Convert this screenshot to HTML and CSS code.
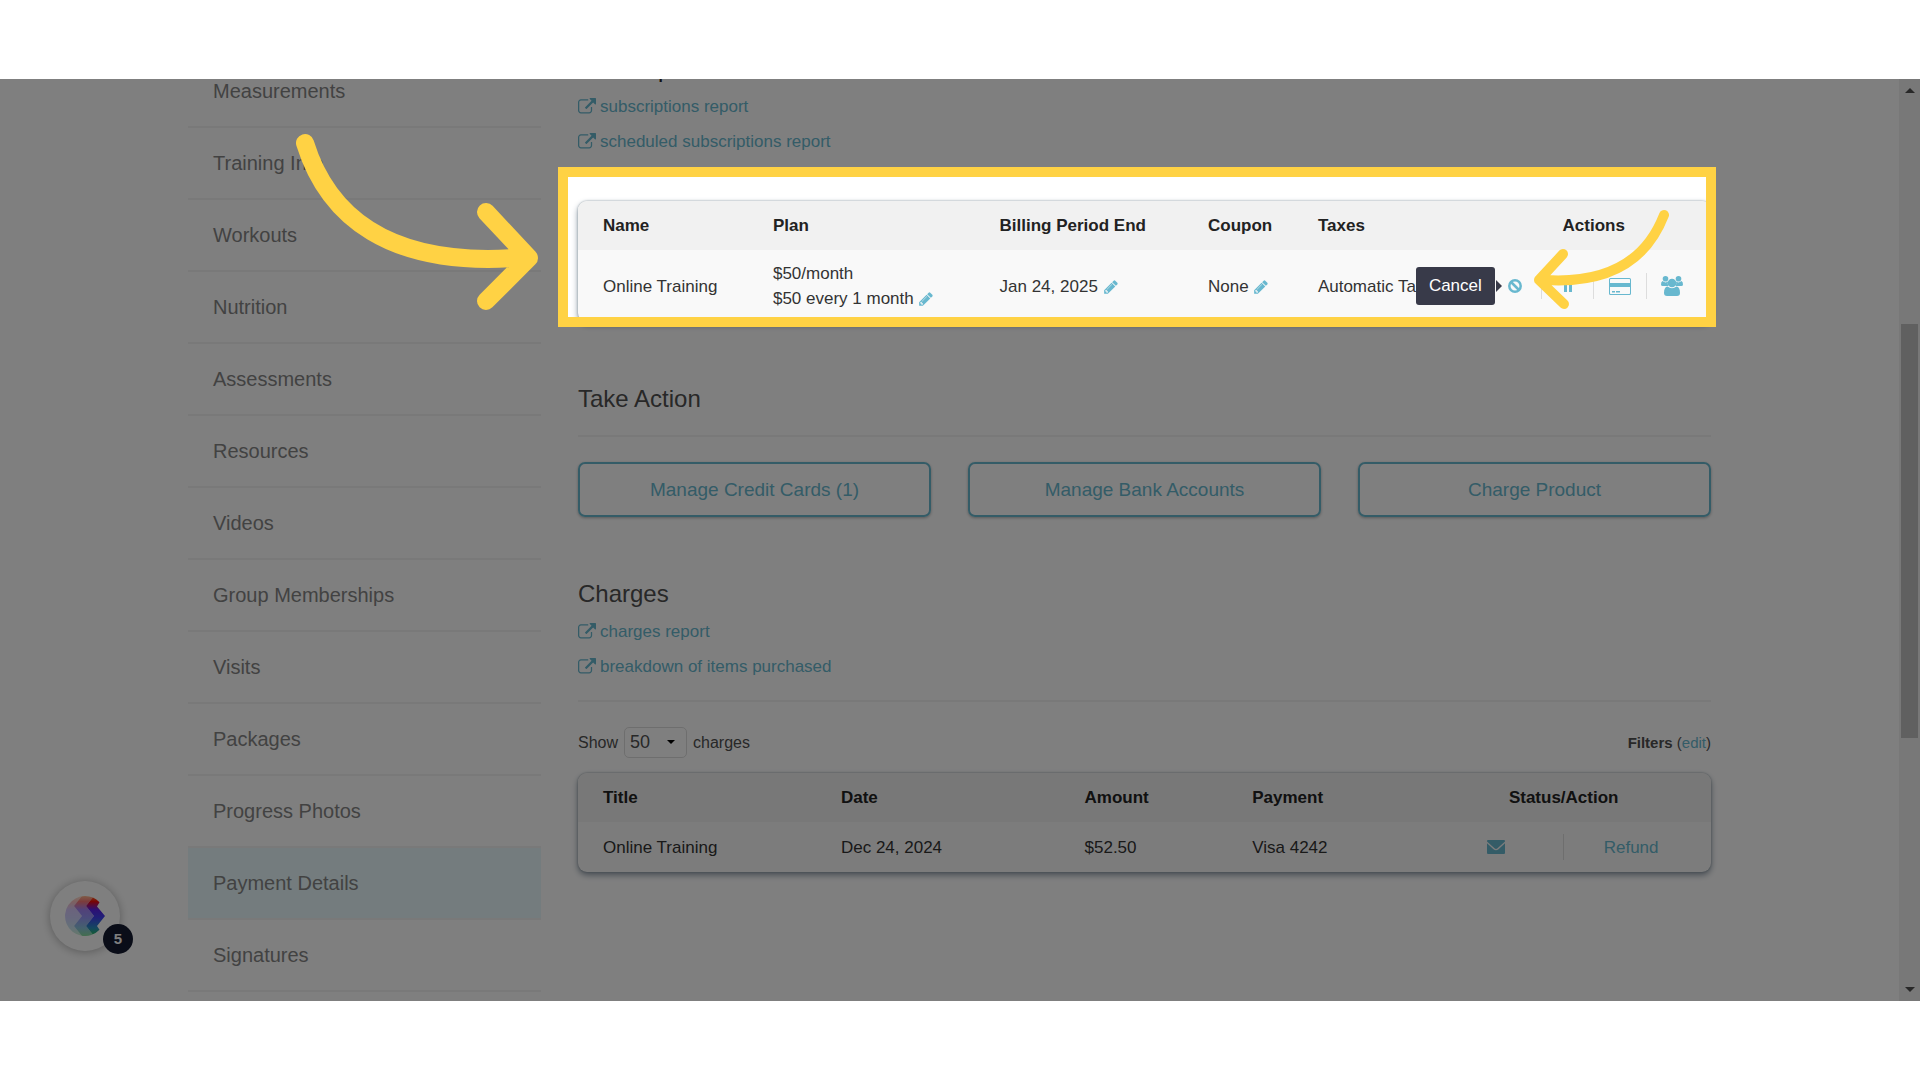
FILE: index.html
```html
<!DOCTYPE html>
<html lang="en">
<head>
<meta charset="utf-8">
<title>Payment Details</title>
<link rel="stylesheet" href="styles.css">
</head>
<body>
<svg class="sprite" aria-hidden="true">
  <symbol id="external" viewBox="0 0 1792 1792"><path d="M1408 928v320q0 119-84.5 203.5t-203.5 84.5h-832q-119 0-203.5-84.5t-84.5-203.5v-832q0-119 84.5-203.5t203.5-84.5h704q14 0 23 9t9 23v64q0 14-9 23t-23 9h-704q-66 0-113 47t-47 113v832q0 66 47 113t113 47h832q66 0 113-47t47-113v-320q0-14 9-23t23-9h64q14 0 23 9t9 23zm384-864v512q0 26-19 45t-45 19-45-19l-176-176-652 652q-10 10-23 10t-23-10l-114-114q-10-10-10-23t10-23l652-652-176-176q-19-19-19-45t19-45 45-19h512q26 0 45 19t19 45z"/></symbol>
  <symbol id="pencil" viewBox="0 0 1792 1792"><path d="M491 1536l91-91-235-235-91 91v107h128v128h107zm523-928q0-22-22-22-10 0-17 7l-542 542q-7 7-7 17 0 22 22 22 10 0 17-7l542-542q7-7 7-17zm-54-192l416 416-832 832h-416v-416zm683 96q0 53-37 90l-166 166-416-416 166-165q36-38 90-38 53 0 91 38l235 234q37 39 37 91z"/></symbol>
</svg>
<div class="screen">
  <div class="page">
    <nav class="sidebar">
      <a href="#">Measurements</a>
      <a href="#">Training Info</a>
      <a href="#">Workouts</a>
      <a href="#">Nutrition</a>
      <a href="#">Assessments</a>
      <a href="#">Resources</a>
      <a href="#">Videos</a>
      <a href="#">Group Memberships</a>
      <a href="#">Visits</a>
      <a href="#">Packages</a>
      <a href="#">Progress Photos</a>
      <a href="#" class="current">Payment Details</a>
      <a href="#">Signatures</a>
    </nav>
    <main class="content">
      <section>
        <h2 class="strong">Subscriptions</h2>
        <a class="report" href="#"><svg><use href="#external"/></svg>subscriptions report</a>
        <a class="report" href="#"><svg><use href="#external"/></svg>scheduled subscriptions report</a>
        <div class="spotlight">
          <table class="subscriptions">
            <colgroup><col class="s1"><col class="s2"><col class="s3"><col class="s4"><col class="s5"><col></colgroup>
            <thead><tr><th>Name</th><th>Plan</th><th>Billing Period End</th><th>Coupon</th><th>Taxes</th><th class="center">Actions</th></tr></thead>
            <tbody><tr>
              <td>Online Training</td>
              <td>$50/month<br>$50 every 1 month <button class="edit" aria-label="Edit plan"><svg><use href="#pencil"/></svg></button></td>
              <td>Jan 24, 2025 <button class="edit" aria-label="Edit period end"><svg><use href="#pencil"/></svg></button></td>
              <td>None <button class="edit" aria-label="Edit coupon"><svg><use href="#pencil"/></svg></button></td>
              <td>Automatic Tax</td>
              <td class="actions"><div class="split">
                <button aria-label="Cancel subscription"><svg class="ban" width="14" height="14" viewBox="0 0 14 14"><circle cx="7" cy="7" r="5.7"/><path d="M3 3l8 8"/></svg><span class="tip">Cancel</span></button>
                <button aria-label="Pause"><svg width="8" height="14" viewBox="0 0 8 14"><path d="M0 1h3v12H0zM5 1h3v12H5z"/></svg></button>
                <button aria-label="Credit card"><svg width="22" height="17" viewBox="0 0 22 17"><path fill-rule="evenodd" d="M1.500 0h19Q22 0 22 1.500v14q0 1.500-1.500 1.500h-19Q0 17 0 15.500v-14Q0 0 1.500 0zM1 1.500V5h20V1.500L20.500 1h-19zM1 9v6.500l.5.5h19l.5-.5V9zM3 13h3v1.500H3zM7 13h4v1.500H7z"/></svg></button>
                <button aria-label="Group"><svg width="22" height="20" viewBox="0 0 22 20"><circle cx="4.500" cy="2.800" r="2.800"/><circle cx="17.500" cy="2.800" r="2.800"/><path d="M1.500 5Q4.500 7.500 7 5.600 6.200 8 7.600 10H1.700Q0 10 0 8.500 0 5.500 1.500 5zM20.500 5Q17.500 7.500 15 5.600 15.800 8 14.400 10h5.900Q22 10 22 8.500 22 5.500 20.500 5z"/><circle cx="11" cy="7" r="4.300"/><path d="M6.500 10.500Q11 14 15.500 10.500 19 11 19 17q0 3-3 3H6q-3 0-3-3 0-6 3.500-6.500z"/></svg></button>
              </div></td>
            </tr></tbody>
          </table>
          <div class="frame"></div>
          <svg class="arrow arrow-big" viewBox="0 0 240 180"><path d="M10 10C32 81 92 137 232 124M191 79l43 46-43 43"/></svg>
          <svg class="arrow arrow-small" viewBox="0 0 140 110"><path d="M131 11C114 55 77 80 12 76M30 50L6 76l25 24"/></svg>
        </div>
      </section>

      <section class="take-action">
        <h2>Take Action</h2>
        <hr>
        <div class="buttons">
          <button>Manage Credit Cards (1)</button>
          <button>Manage Bank Accounts</button>
          <button>Charge Product</button>
        </div>
      </section>

      <section>
        <h2>Charges</h2>
        <a class="report" href="#"><svg><use href="#external"/></svg>charges report</a>
        <a class="report" href="#"><svg><use href="#external"/></svg>breakdown of items purchased</a>
        <hr>
        <div class="controls">
          <label for="count">Show</label>
          <span class="select"><select id="count"><option>50</option></select></span>
          <span>charges</span>
          <span class="filters"><b>Filters</b> (<a href="#">edit</a>)</span>
        </div>
        <table class="charges">
          <colgroup><col class="c1"><col class="c2"><col class="c3"><col class="c4"><col></colgroup>
          <thead><tr><th>Title</th><th>Date</th><th>Amount</th><th>Payment</th><th class="center">Status/Action</th></tr></thead>
          <tbody><tr>
            <td>Online Training</td><td>Dec 24, 2024</td><td>$52.50</td><td>Visa 4242</td>
            <td class="actions"><div class="split">
              <button aria-label="Email receipt"><svg width="18" height="14" viewBox="0 0 18 14"><path d="M1 0h16q1 0 1 1v.5L10.500 8.300q-1.500 1.200-3 0L0 1.500V1q0-1 1-1zM0 3.300l6.500 6q2.500 2 5 0l6.500-6V13q0 1-1 1H1q-1 0-1-1z"/></svg></button>
              <button>Refund</button>
            </div></td>
          </tr></tbody>
        </table>
      </section>
    </main>
  </div>

  <div class="scrollbar"><i class="up"></i><div class="track"><div class="thumb"></div></div><i class="down"></i></div>

  <button class="launcher" aria-label="Open checklist">
    <svg width="40" height="40" viewBox="0 0 40 40">
      <defs>
        <linearGradient id="hue" gradientUnits="userSpaceOnUse" x1="0" y1="0" x2="0" y2="40"><stop offset="0" stop-color="#ff7a30"/><stop offset=".14" stop-color="#f00a0a"/><stop offset=".34" stop-color="#5a20e8"/><stop offset=".54" stop-color="#4040f0"/><stop offset=".8" stop-color="#2a90c0"/><stop offset="1" stop-color="#28c050"/></linearGradient>
        <clipPath id="disc"><path d="M20 0a20 20 0 0 1 14.500 6.200L32 10.500 40 20l-8 10 2.500 3.800A20 20 0 1 1 20 0z"/></clipPath>
      </defs>
      <g clip-path="url(#disc)">
        <path fill="url(#hue)" opacity=".25" d="M0 0h17l-8 10 8 10-8 10 8 10H0z"/>
        <path fill="url(#hue)" opacity=".55" d="M17 0h12l-8 10 8 10-8 10 8 10H17l-8-10 8-10-8-10z"/>
        <path fill="url(#hue)" d="M29 0h11v40H29l-8-10 8-10-8-10z"/>
      </g>
    </svg>
    <span class="badge">5</span>
  </button>
</div>
</body>
</html>
```
FILE: styles.css
```css
* { box-sizing: border-box; }

body {
  margin: 0;
  padding: 79px 0;
  height: 100vh;
  display: flex;
  background: #fff;
  color: #333;
  font: 17px/25px "Liberation Sans", Arial, sans-serif;
}

button, select { font: inherit; color: inherit; cursor: pointer; }
button { padding: 0; border: 0; background: none; color: #68b8cf; }
a { color: #68b8cf; text-decoration: none; }
svg { fill: currentColor; }
.sprite { position: absolute; width: 0; height: 0; }

.screen {
  position: relative;
  isolation: isolate;
  flex: 1;
  display: flex;
  overflow: hidden;
}

.page {
  flex: 1;
  display: grid;
  grid-template-columns: 353px 1fr;
  align-items: start;
  gap: 37px;
  padding: 0 188px;
}

/* sidebar */
.sidebar { margin-top: -23px; }
.sidebar a {
  display: block;
  height: 72px;
  padding: 0 25px;
  border-bottom: 2px solid #f2f2f2;
  color: #858585;
  font-size: 20px;
  line-height: 70px;
}
.sidebar .current { background: #e8f9fc; }

/* content */
.content { margin-top: -27px; min-width: 0; }
h2 {
  margin: 0;
  padding-bottom: 3px;
  color: #505050;
  font-size: 24px;
  font-weight: 400;
  line-height: 34px;
}
h2.strong { color: #222; }
hr { margin: 16px 0 25px; border: 0; border-top: 2px solid #f2f2f2; }

.report {
  display: flex;
  align-items: center;
  gap: 4px;
  line-height: 35px;
}
.report svg { width: 18px; height: 18px; }

table {
  width: 100%;
  table-layout: fixed;
  border-collapse: collapse;
  border-radius: 9px;
  overflow: hidden;
  background: #f9f9f9;
  box-shadow: 0 0 2px #8a979f, 0 3px 6px #8b98a5;
}
th, td { padding: 0 0 0 25px; text-align: left; white-space: nowrap; }
th { height: 49px; background: #f1f1f1; color: #222; }
th.center { padding: 0; text-align: center; }
td.actions { padding: 0 13px; }

.s1 { width: 15%; }
.s2 { width: 20%; }
.s3 { width: 18.4%; }
.s4 { width: 9.7%; }
.s5 { width: 16.2%; }
.c1 { width: 21%; }
.c2 { width: 21.5%; }
.c3 { width: 14.8%; }
.c4 { width: 16.7%; }

.subscriptions td { height: 72px; }
.charges td { height: 50px; }

.edit svg { display: block; width: 16px; height: 16px; }
.edit { vertical-align: -3px; }

.split { display: flex; }
.split button {
  position: relative;
  flex: 1;
  display: flex;
  align-items: center;
  justify-content: center;
  height: 26px;
}
.split button + button { border-left: 1px solid #ddd; }
.ban { fill: none; stroke: currentColor; stroke-width: 2.5; }

.tip {
  position: absolute;
  right: 46px;
  top: -6px;
  padding: 0 13px;
  border-radius: 3px;
  background: #383a49;
  color: #fff;
  line-height: 38px;
}
.tip::after {
  content: "";
  position: absolute;
  left: 100%;
  top: 13px;
  margin-left: 1px;
  border: 6px solid transparent;
  border-left-color: #383a49;
  border-right: 0;
}

/* tutorial highlight */
.spotlight { position: relative; margin: 42px 0 60px; }
.frame {
  position: absolute;
  z-index: 5;
  inset: -34px -5px -5px -20px;
  border: 10px solid #ffd244;
  box-shadow: 0 0 0 9999px rgba(0, 0, 0, .5);
  pointer-events: none;
}
.arrow {
  position: absolute;
  z-index: 6;
  overflow: visible;
  fill: none;
  stroke: #ffd244;
  stroke-linecap: round;
  stroke-linejoin: round;
  pointer-events: none;
}
.arrow-big { left: -283px; top: -68px; width: 240px; height: 180px; stroke-width: 18px; }
.arrow-small { right: 38px; top: 3px; width: 140px; height: 110px; stroke-width: 10px; }

.take-action { margin-bottom: 60px; }
.buttons { display: grid; grid-template-columns: repeat(3, 1fr); gap: 37px; }
.buttons button {
  height: 55px;
  border: 2px solid #68b8cf;
  border-radius: 7px;
  box-shadow: 0 1px 3px rgba(0, 0, 0, .3);
  font-size: 19px;
}

.controls {
  display: flex;
  align-items: center;
  gap: 6px;
  margin-bottom: 15px;
  color: #505050;
  font-size: 16px;
}
.select { position: relative; }
.select select {
  display: block;
  width: 63px;
  height: 31px;
  padding: 0 5px;
  appearance: none;
  border: 1px solid #ddd;
  border-radius: 5px;
  background: none;
  font-size: 18px;
}
.select::after {
  content: "";
  position: absolute;
  right: 12px;
  top: 13px;
  border: 4px solid transparent;
  border-top-color: #000;
  border-bottom: 0;
  pointer-events: none;
}
.filters { margin-left: auto; font-size: 15px; }

/* window scrollbar */
.scrollbar {
  display: flex;
  flex-direction: column;
  align-items: center;
  width: 21px;
  padding: 9px 0;
  background: #f1f1f1;
}
.scrollbar .track { flex: 1; width: 17px; padding: 231px 0 249px; display: flex; }
.scrollbar .thumb { flex: 1; background: #c1c1c1; }
.scrollbar i { border: 5px solid transparent; }
.scrollbar .up { border-top: 0; border-bottom-color: #505050; }
.scrollbar .down { border-bottom: 0; border-top-color: #505050; }

/* floating launcher */
.launcher {
  position: absolute;
  left: 50px;
  bottom: 50px;
  display: grid;
  place-items: center;
  width: 70px;
  height: 70px;
  border-radius: 50%;
  background: #fff;
  box-shadow: 0 1px 10px rgba(0, 0, 0, .3);
}
.badge {
  position: absolute;
  left: 53px;
  top: 43px;
  width: 30px;
  height: 30px;
  border-radius: 50%;
  background: #141a30;
  color: #fff;
  font-size: 15px;
  font-weight: 700;
  line-height: 30px;
}
```
